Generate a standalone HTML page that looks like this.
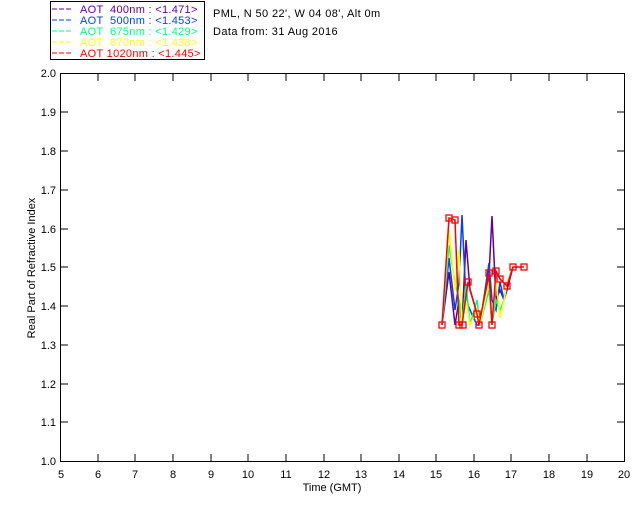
<!DOCTYPE html>
<html><head><style>
body{margin:0;background:#fff;width:640px;height:512px;overflow:hidden}
svg text{font-family:"Liberation Sans",sans-serif;font-size:11px}
</style></head><body>
<svg width="640" height="512" xmlns="http://www.w3.org/2000/svg">
<rect x="50.5" y="1.5" width="154" height="58" fill="none" stroke="#000"/>
<g font-size="11" letter-spacing="0.3">
<line x1="52" y1="9" x2="73" y2="9" stroke="#6000a0" stroke-dasharray="5,2"/><text x="80" y="13" fill="#6000a0" xml:space="preserve">AOT  400nm : &lt;1.471&gt;</text>
<line x1="52" y1="20" x2="73" y2="20" stroke="#0040ff" stroke-dasharray="5,2"/><text x="80" y="24" fill="#0040ff" xml:space="preserve">AOT  500nm : &lt;1.453&gt;</text>
<line x1="52" y1="31" x2="73" y2="31" stroke="#00ff80" stroke-dasharray="5,2"/><text x="80" y="35" fill="#00ff80" xml:space="preserve">AOT  675nm : &lt;1.429&gt;</text>
<line x1="52" y1="42" x2="73" y2="42" stroke="#ffff00" stroke-dasharray="5,2"/><text x="80" y="46" fill="#ffff00" xml:space="preserve">AOT  870nm : &lt;1.438&gt;</text>
<line x1="52" y1="53" x2="73" y2="53" stroke="#ff0000" stroke-dasharray="5,2"/><text x="80" y="57" fill="#ff0000" xml:space="preserve">AOT 1020nm : &lt;1.445&gt;</text>
</g>
<text x="213" y="17" letter-spacing="0.4">PML, N 50 22', W 04 08', Alt 0m</text>
<text x="213" y="35" letter-spacing="0.4">Data from: 31 Aug 2016</text>
<rect x="60.5" y="73.5" width="564" height="388" fill="none" stroke="#000"/>
<g stroke="#000">
<path d="M98 461v-7M135 461v-7M173 461v-7M211 461v-7M248 461v-7M286 461v-7M324 461v-7M361 461v-7M399 461v-7M436 461v-7M474 461v-7M511 461v-7M549 461v-7M587 461v-7
M98 74v7M135 74v7M173 74v7M211 74v7M248 74v7M286 74v7M324 74v7M361 74v7M399 74v7M436 74v7M474 74v7M511 74v7M549 74v7M587 74v7
M61 422h7M61 384h7M61 345h7M61 306h7M61 267h7M61 229h7M61 190h7M61 151h7M61 112h7
M624 422h-7M624 384h-7M624 345h-7M624 306h-7M624 267h-7M624 229h-7M624 190h-7M624 151h-7M624 112h-7"/>
</g>
<g text-anchor="middle" font-size="11">
<text x="61" y="478">5</text><text x="98" y="478">6</text><text x="135" y="478">7</text><text x="173" y="478">8</text><text x="211" y="478">9</text><text x="248" y="478">10</text><text x="286" y="478">11</text><text x="324" y="478">12</text><text x="361" y="478">13</text><text x="399" y="478">14</text><text x="436" y="478">15</text><text x="474" y="478">16</text><text x="511" y="478">17</text><text x="549" y="478">18</text><text x="587" y="478">19</text><text x="624" y="478">20</text>
<text x="332" y="491">Time (GMT)</text>
</g>
<g text-anchor="end" font-size="11">
<text x="56" y="465">1.0</text><text x="56" y="426">1.1</text><text x="56" y="388">1.2</text><text x="56" y="349">1.3</text><text x="56" y="310">1.4</text><text x="56" y="271">1.5</text><text x="56" y="233">1.6</text><text x="56" y="194">1.7</text><text x="56" y="155">1.8</text><text x="56" y="116">1.9</text><text x="56" y="77">2.0</text>
</g>
<text transform="translate(35,268) rotate(-90)" text-anchor="middle">Real Part of Refractive Index</text>
<g fill="none" stroke-width="1.5">
<polyline stroke="#6000a0" points="442,325 449,272 455,325 459,300 462,325 466,240 470,290 477,313 480,325 489,275 492,216 496,300 500,290 504,300 507,290 513,267"/>
<polyline stroke="#0040ff" points="442,325 449,258 455,310 459,283 462,215 466,300 470,310 477,325 480,325 489,263 492,300 496,310 500,282 504,300 507,283 513,267"/>
<polyline stroke="#00ff80" points="442,325 449,245 455,283 459,300 462,325 466,283 470,325 477,300 480,325 489,290 492,325 496,300 500,310 504,300 507,283 513,267"/>
<polyline stroke="#ffff00" points="442,325 449,230 455,290 459,250 462,325 466,300 470,325 477,310 480,325 489,282 492,325 496,280 500,318 504,300 507,283 513,267"/>
<polyline stroke="#ff0000" points="442,325 449,218 455,220 459,325 462,325 468,282 477,314 479,325 489,273 492,325 496,271 500,279 507,286 513,267 524,267"/>
</g>
<g fill="none" stroke="#ff0000" stroke-width="1.3">
<rect x="439" y="322" width="6" height="6"/><rect x="446" y="215" width="6" height="6"/><rect x="452" y="217" width="6" height="6"/><rect x="456" y="322" width="6" height="6"/><rect x="460" y="322" width="6" height="6"/><rect x="465" y="279" width="6" height="6"/><rect x="474" y="311" width="6" height="6"/><rect x="476" y="322" width="6" height="6"/><rect x="486" y="270" width="6" height="6"/><rect x="489" y="322" width="6" height="6"/><rect x="493" y="268" width="6" height="6"/><rect x="497" y="276" width="6" height="6"/><rect x="504" y="283" width="6" height="6"/><rect x="510" y="264" width="6" height="6"/><rect x="521" y="264" width="6" height="6"/>
</g>
</svg>
</body></html>
